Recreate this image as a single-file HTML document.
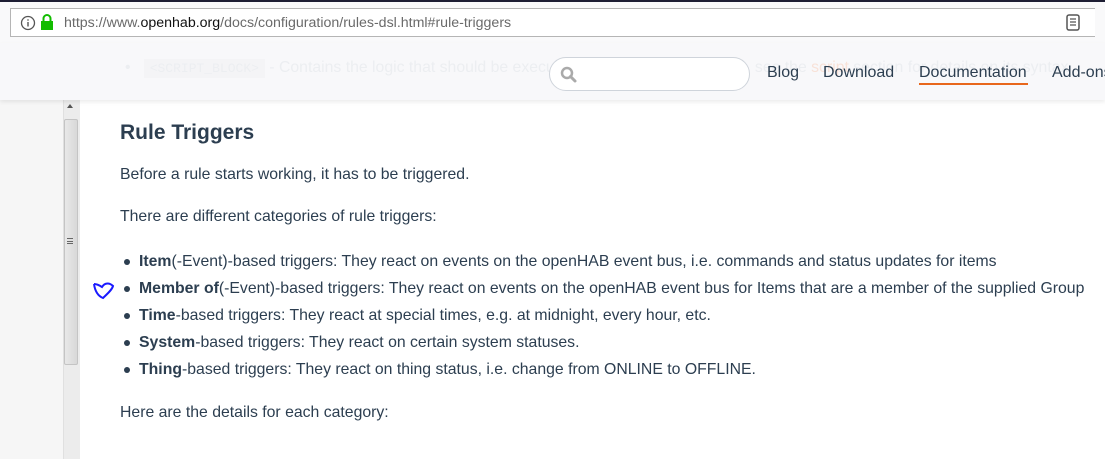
<!DOCTYPE html>
<html><head><meta charset="utf-8"><style>
*{margin:0;padding:0;box-sizing:border-box}
body{width:1105px;height:459px;overflow:hidden;background:#fff;font-family:"Liberation Sans",sans-serif;color:#2c3e50;position:relative}
.top{position:absolute;left:0;top:0;width:1105px;height:43px;background:#f9f9fa}
.dark{position:absolute;left:0;top:0;width:1105px;height:2px;background:#1d1d33}
.url{position:absolute;left:10px;top:8px;width:1085px;height:29px;background:#fff;border:1px solid #b5b5b5;border-right:none}
.url span.t{position:absolute;left:53px;top:6px;font-size:14.2px;color:#6a6a6a;white-space:nowrap}
.url b{color:#111;font-weight:normal}
.left{position:absolute;left:0;top:43px;width:63px;height:416px;background:#f6f6f6}
.sb{position:absolute;left:63px;top:100px;width:17px;height:359px;background:#ececec;border-left:1px solid #e0e0e0}
.thumb{position:absolute;left:64px;top:119px;width:14px;height:246px;background:linear-gradient(90deg,#e8e8e8,#d8d8d8);border:1px solid #c4c4c4;border-radius:2px}
.hdr{position:absolute;left:0;top:43px;width:1105px;height:57px;background:#f8f8fa;box-shadow:0 2px 4px rgba(0,0,0,.08);overflow:hidden}
.hdr .ghost{position:absolute;left:125px;top:16px;font-size:15.8px;color:#eceef1;white-space:nowrap}
.search{position:absolute;left:549px;top:14px;width:201px;height:34px;border:1px solid #cfd4db;border-radius:17px;background:#fff}
.nav{position:absolute;top:21px;font-size:16px;color:#2c3e50;white-space:nowrap}
.c{position:absolute;left:120px;font-size:15.8px;white-space:nowrap}
h2{position:absolute;left:120px;top:121px;font-size:21px;font-weight:bold}
.li{position:absolute;left:139px;font-size:15.8px;white-space:nowrap}
.dot{position:absolute;left:124px;width:6px;height:6px;border-radius:50%;background:#2c3e50}
</style></head><body>
<div class="top"><div class="dark"></div>
<div class="url">
<svg style="position:absolute;left:9px;top:6px" width="16" height="16"><circle cx="8" cy="8" r="6.5" fill="none" stroke="#555" stroke-width="1.3"/><rect x="7.3" y="7" width="1.4" height="4.5" fill="#555"/><rect x="7.3" y="4.3" width="1.4" height="1.4" fill="#555"/></svg>
<svg style="position:absolute;left:29px;top:4px" width="14" height="18"><path d="M3.5 8V5.5a3.5 3.5 0 0 1 7 0V8" fill="none" stroke="#12bc00" stroke-width="2"/><rect x="1" y="8" width="12" height="9" fill="#12bc00"/></svg>
<span class="t">https://www.<b>openhab.org</b>/docs/configuration/rules-dsl.html#rule-triggers</span>
<svg style="position:absolute;left:1055px;top:5px" width="14" height="17"><rect x="1" y="1" width="12" height="15" rx="2" fill="none" stroke="#555" stroke-width="1.5"/><path d="M4 5h6M4 8h6M4 11h6" stroke="#555" stroke-width="1.2"/></svg>
</div></div>
<div class="left"></div>
<div class="sb"></div><div class="thumb"></div>
<div style="position:absolute;left:67px;top:104px;width:0;height:0;border:3px solid transparent;border-bottom:4px solid #555;border-top:0"></div>
<div style="position:absolute;left:67px;top:238px;width:6px;height:6px;border-top:1px solid #666;border-bottom:1px solid #666"><div style="margin-top:2px;border-top:1px solid #666"></div></div>
<div class="hdr">
<div class="ghost">•&nbsp;&nbsp;&nbsp;<span style="background:#f4f4f6;padding:2px 6px;font-family:'Liberation Mono',monospace;font-size:13px">&lt;SCRIPT_BLOCK&gt;</span> - Contains the logic that should be executed when a condition is met, see the <span style="color:#f8e2d8">script</span> section for details on its syntax</div>
<div class="search"><svg style="position:absolute;left:10px;top:8px" width="18" height="18"><circle cx="7" cy="7" r="5" fill="none" stroke="#aaa" stroke-width="2.5"/><path d="M10.5 10.5L15 15" stroke="#aaa" stroke-width="3" stroke-linecap="round"/></svg></div>
<div class="nav" style="left:767px">Blog</div>
<div class="nav" style="left:823px">Download</div>
<div class="nav" style="left:919px">Documentation</div>
<div style="position:absolute;left:919px;top:40px;width:109px;height:2px;background:#e8671c"></div>
<div class="nav" style="left:1052px">Add-ons</div>
</div>
<h2>Rule Triggers</h2>
<div class="c" style="top:166px">Before a rule starts working, it has to be triggered.</div>
<div class="c" style="top:208px">There are different categories of rule triggers:</div>
<div class="dot" style="top:259px"></div><div class="li" style="top:253px"><b>Item</b>(-Event)-based triggers: They react on events on the openHAB event bus, i.e. commands and status updates for items</div>
<div class="dot" style="top:286px"></div><div class="li" style="top:280px"><b>Member of</b>(-Event)-based triggers: They react on events on the openHAB event bus for Items that are a member of the supplied Group</div>
<div class="dot" style="top:313px"></div><div class="li" style="top:307px"><b>Time</b>-based triggers: They react at special times, e.g. at midnight, every hour, etc.</div>
<div class="dot" style="top:340px"></div><div class="li" style="top:334px"><b>System</b>-based triggers: They react on certain system statuses.</div>
<div class="dot" style="top:367px"></div><div class="li" style="top:361px"><b>Thing</b>-based triggers: They react on thing status, i.e. change from ONLINE to OFFLINE.</div>
<div class="c" style="top:404px">Here are the details for each category:</div>
<svg style="position:absolute;left:92px;top:281px" width="24" height="20"><path d="M2 3C3 10 6 15 11 17C15 13 20 9 21 5C18 2 13 1 10 6C7 4 4 3 2 3" fill="none" stroke="#1a1aff" stroke-width="2"/></svg>
</body></html>
